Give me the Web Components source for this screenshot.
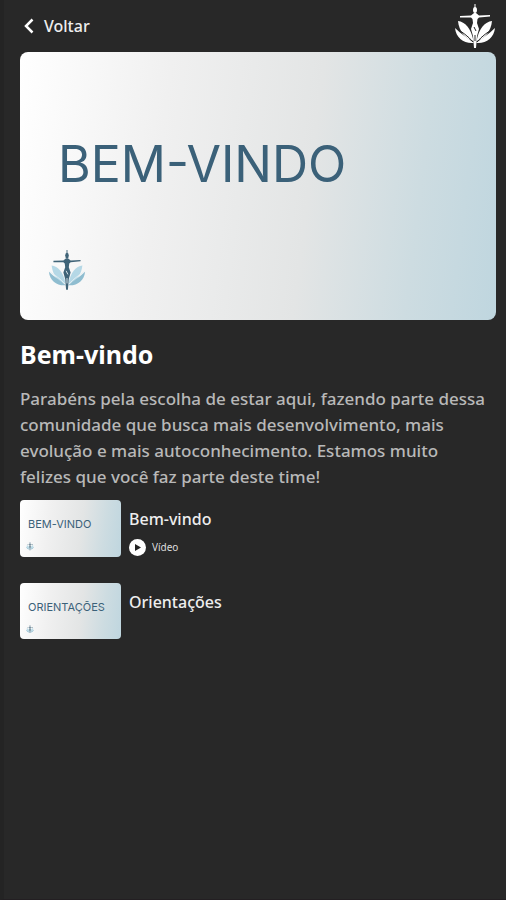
<!DOCTYPE html>
<html lang="pt-BR">
<head>
<meta charset="utf-8">
<meta name="viewport" content="width=device-width, initial-scale=1">
<title>Bem-vindo</title>
<style>
body {
	margin: 0;
	background: #282828;
	color: #fff;
	font-family: "Noto Sans", sans-serif;
}
</style>
</head>
<body>
<course-page>
	<top-bar slot="header"></top-bar>
	<cover-card slot="cover">BEM-VINDO</cover-card>
	<span slot="title">Bem-vindo</span>
	<span slot="text">Parabéns pela escolha de estar aqui, fazendo parte dessa comunidade que busca mais desenvolvimento, mais evolução e mais autoconhecimento. Estamos muito felizes que você faz parte deste time!</span>
	<lesson-item>
		<cover-card slot="thumb" small>BEM-VINDO</cover-card>
		Bem-vindo
		<video-tag slot="kind">Vídeo</video-tag>
	</lesson-item>
	<lesson-item>
		<cover-card slot="thumb" small>ORIENTAÇÕES</cover-card>
		Orientações
	</lesson-item>
</course-page>

<script>
(function() {

function define(name, html) {
	const tmpl = document.createElement('template');
	tmpl.innerHTML = html;
	customElements.define(name, class extends HTMLElement {
		constructor() {
			super();
			this.attachShadow({mode: 'open'}).appendChild(tmpl.content.cloneNode(true));
		}
	});
}

// figure with open arms between lotus petals
define('brand-mark', `
<style>
:host { display: block; width: 42px; color: #fff; }
svg { display: block; width: 100%; height: auto; }
.body { fill: currentColor; }
.petal { fill: var(--petal, currentColor); }
.petal-low { fill: var(--petal-low, currentColor); }
.vein { fill: none; stroke: var(--vein, #282828); stroke-width: 1; }
</style>
<svg viewBox="0 0 42 44" aria-hidden="true">
	<path class="petal" d="M4 17C11 18 17 24 19.500 37C11 35 5 27 4 17Z"/>
	<path class="petal" d="M38 17C31 18 25 24 22.500 37C31 35 37 27 38 17Z"/>
	<path class="petal-low" d="M1 24C2 34 10 40 20 39C14 34 7 30 1 24Z"/>
	<path class="petal-low" d="M41 24C40 34 32 40 22 39C28 34 35 30 41 24Z"/>
	<path class="vein" d="M2 24C8 28 14 32 19 38M40 24C34 28 28 32 23 38"/>
	<ellipse class="body" cx="21" cy="6" rx="2" ry="3"/>
	<path class="body" d="M20.500 0H21.500V5H20.500ZM6 12L17 11.500L20 9H22L25 11.500L36 11V12.500L25 13.500L23.500 15L23 19L25 25L23 32L22 44H20L19 32L17 25L19 19L18.500 15L17 13.500L6 13.500Z"/>
	<path class="vein" d="M20 23L22 27M21 31V37"/>
</svg>
`);

define('top-bar', `
<style>
:host {
	display: flex;
	justify-content: space-between;
	align-items: center;
	height: 52px;
	padding: 0 0 0 4px;
}
button {
	display: flex;
	align-items: center;
	gap: 10px;
	padding: 0;
	border: 0;
	background: none;
	color: #eee;
	font: 500 16px/24px "Noto Sans", sans-serif;
	cursor: pointer;
}
svg { display: block; }
</style>
<button type="button">
	<svg width="10" height="16" viewBox="0 0 10 16" fill="none" stroke="#fff" stroke-width="2.500" aria-hidden="true"><path d="M8.500 1.500L2 8L8.500 14.500"/></svg>
	Voltar
</button>
<brand-mark></brand-mark>
`);

define('cover-card', `
<style>
:host {
	display: flex;
	flex-direction: column;
	justify-content: space-between;
	box-sizing: border-box;
	aspect-ratio: 16 / 9;
	padding: 84px 28px 30px;
	border-radius: 8px;
	background: linear-gradient(97deg, #fff 0%, #f0f0f0 30%, #e3e5e5 60%, #cddce1 82%, #bfd6df 100%);
	color: #3b6179;
	font: 50px/56px Inter, sans-serif;
	white-space: nowrap;
}
.name { display: block; padding-left: 10px; }
brand-mark {
	width: 38px;
	color: #3f6377;
	--petal: #b5d8e6;
	--petal-low: #8fbdd0;
	--vein: #e6f0f3;
}
:host([small]) {
	width: 101px;
	padding: 17px 6px 6px;
	border-radius: 4px;
	font-size: 11px;
	line-height: 14px;
}
:host([small]) .name { padding-left: 2px; }
:host([small]) brand-mark { width: 8px; }
</style>
<span class="name"><slot></slot></span>
<brand-mark></brand-mark>
`);

define('video-tag', `
<style>
:host {
	display: flex;
	align-items: center;
	gap: 6px;
	color: #ddd;
	font-size: 10px;
	line-height: 16px;
}
svg { display: block; }
</style>
<svg width="17" height="17" viewBox="0 0 17 17" aria-hidden="true"><circle cx="8.500" cy="8.500" r="8.500" fill="#fff"/><path d="M6 5L12 8.500L6 12Z" fill="#222"/></svg>
<span><slot></slot></span>
`);

define('lesson-item', `
<style>
:host { display: block; }
a {
	display: flex;
	gap: 8px;
	color: #eee;
	text-decoration: none;
}
.info {
	display: flex;
	flex-direction: column;
	gap: 8px;
	padding-top: 7px;
	font-size: 16px;
	line-height: 24px;
}
.name { font-weight: 500; }
</style>
<a href="#">
	<slot name="thumb"></slot>
	<div class="info">
		<div class="name"><slot></slot></div>
		<slot name="kind"></slot>
	</div>
</a>
`);

define('course-page', `
<style>
:host {
	display: block;
	box-sizing: border-box;
	min-height: 100vh;
	padding: 0 10px 24px 16px;
	border-left: 4px solid #242424;
	border-bottom: 1px solid #231f22;
}
h1 {
	margin: 18px 0 16px;
	font-size: 25px;
	line-height: 32px;
}
p {
	margin: 0 0 10px;
	padding-right: 6px;
	color: #b8b8b8;
	font-size: 17px;
	font-weight: 500;
	line-height: 26px;
}
.lessons {
	display: flex;
	flex-direction: column;
	gap: 26px;
}
</style>
<header><slot name="header"></slot></header>
<main>
	<slot name="cover"></slot>
	<h1><slot name="title"></slot></h1>
	<p><slot name="text"></slot></p>
	<div class="lessons"><slot></slot></div>
</main>
`);

})();
</script>
</body>
</html>
